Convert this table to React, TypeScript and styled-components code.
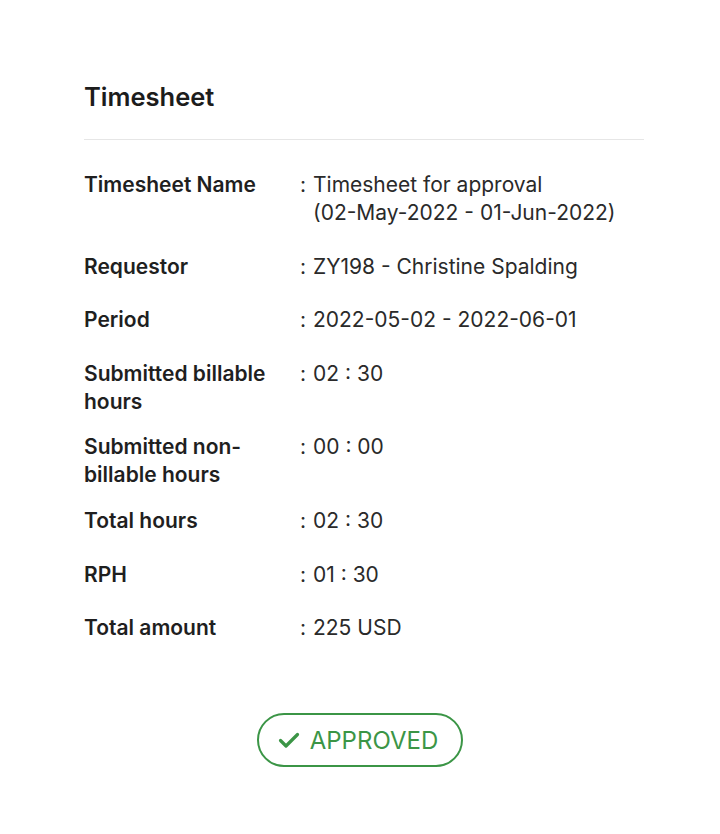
import React from "react";
import styled, { createGlobalStyle } from "styled-components";

const Global = createGlobalStyle`
  html, body { margin: 0; padding: 0; background: #ffffff; }
  body { font-family: Inter, Roboto, "Noto Sans", "Liberation Sans", sans-serif; color: #1f1f1f; }
`;

const Page = styled.div`
  width: 720px;
  min-height: 834px;
  box-sizing: border-box;
  padding: 81px 76px 0 84px;
  display: flex;
  flex-direction: column;
`;

const Title = styled.h1`
  margin: 0;
  font-size: 25.5px;
  line-height: 32px;
  font-weight: 600;
  color: #1c1c1c;
`;

const Divider = styled.hr`
  margin: 26px 0 0 0;
  border: none;
  border-top: 1.5px solid #e6e6e6;
`;

const List = styled.div`
  display: flex;
  flex-direction: column;
  padding-top: 31px;
`;

const Row = styled.div<{ $gap: number }>`
  display: grid;
  grid-template-columns: 216px 13px 1fr;
  font-size: 21px;
  line-height: 28px;
  margin-bottom: ${(p) => p.$gap}px;
`;

const Label = styled.div`
  font-weight: 600;
  color: #1f1f1f;
  padding-right: 4px;
`;

const Colon = styled.div`
  color: #2a2a2a;
`;

const Value = styled.div`
  color: #2a2a2a;
  font-weight: 400;
`;

const Actions = styled.div`
  display: flex;
  justify-content: center;
  margin-top: 71px;
  padding-right: 8px;
`;

const StatusPill = styled.div`
  box-sizing: border-box;
  width: 206px;
  height: 54px;
  border: 2px solid #3b9546;
  border-radius: 27px;
  display: flex;
  align-items: center;
  justify-content: center;
  gap: 10px;
  color: #3b9546;
  font-size: 24px;
  padding-right: 4px;
`;

const rows: { label: string; value: React.ReactNode; gap: number }[] = [
  {
    label: "Timesheet Name",
    value: (
      <>
        Timesheet for approval
        <br />
        (02-May-2022 - 01-Jun-2022)
      </>
    ),
    gap: 26,
  },
  { label: "Requestor", value: "ZY198 - Christine Spalding", gap: 25 },
  { label: "Period", value: "2022-05-02 - 2022-06-01", gap: 26 },
  { label: "Submitted billable hours", value: "02 : 30", gap: 17 },
  { label: "Submitted non-billable hours", value: "00 : 00", gap: 18 },
  { label: "Total hours", value: "02 : 30", gap: 26 },
  { label: "RPH", value: "01 : 30", gap: 25 },
  { label: "Total amount", value: "225 USD", gap: 0 },
];

export default function App() {
  return (
    <>
      <Global />
      <Page>
        <Title>Timesheet</Title>
        <Divider />
        <List>
          {rows.map((r) => (
            <Row key={r.label} $gap={r.gap}>
              <Label>{r.label}</Label>
              <Colon>:</Colon>
              <Value>{r.value}</Value>
            </Row>
          ))}
        </List>
        <Actions>
          <StatusPill>
            <svg width="22" height="18" viewBox="0 0 22 18" fill="none">
              <path d="M2.5 9.5 L8 15 L19.5 3.5" stroke="#3b9546" strokeWidth="3.2" strokeLinecap="round" strokeLinejoin="round" />
            </svg>
            APPROVED
          </StatusPill>
        </Actions>
      </Page>
    </>
  );
}
